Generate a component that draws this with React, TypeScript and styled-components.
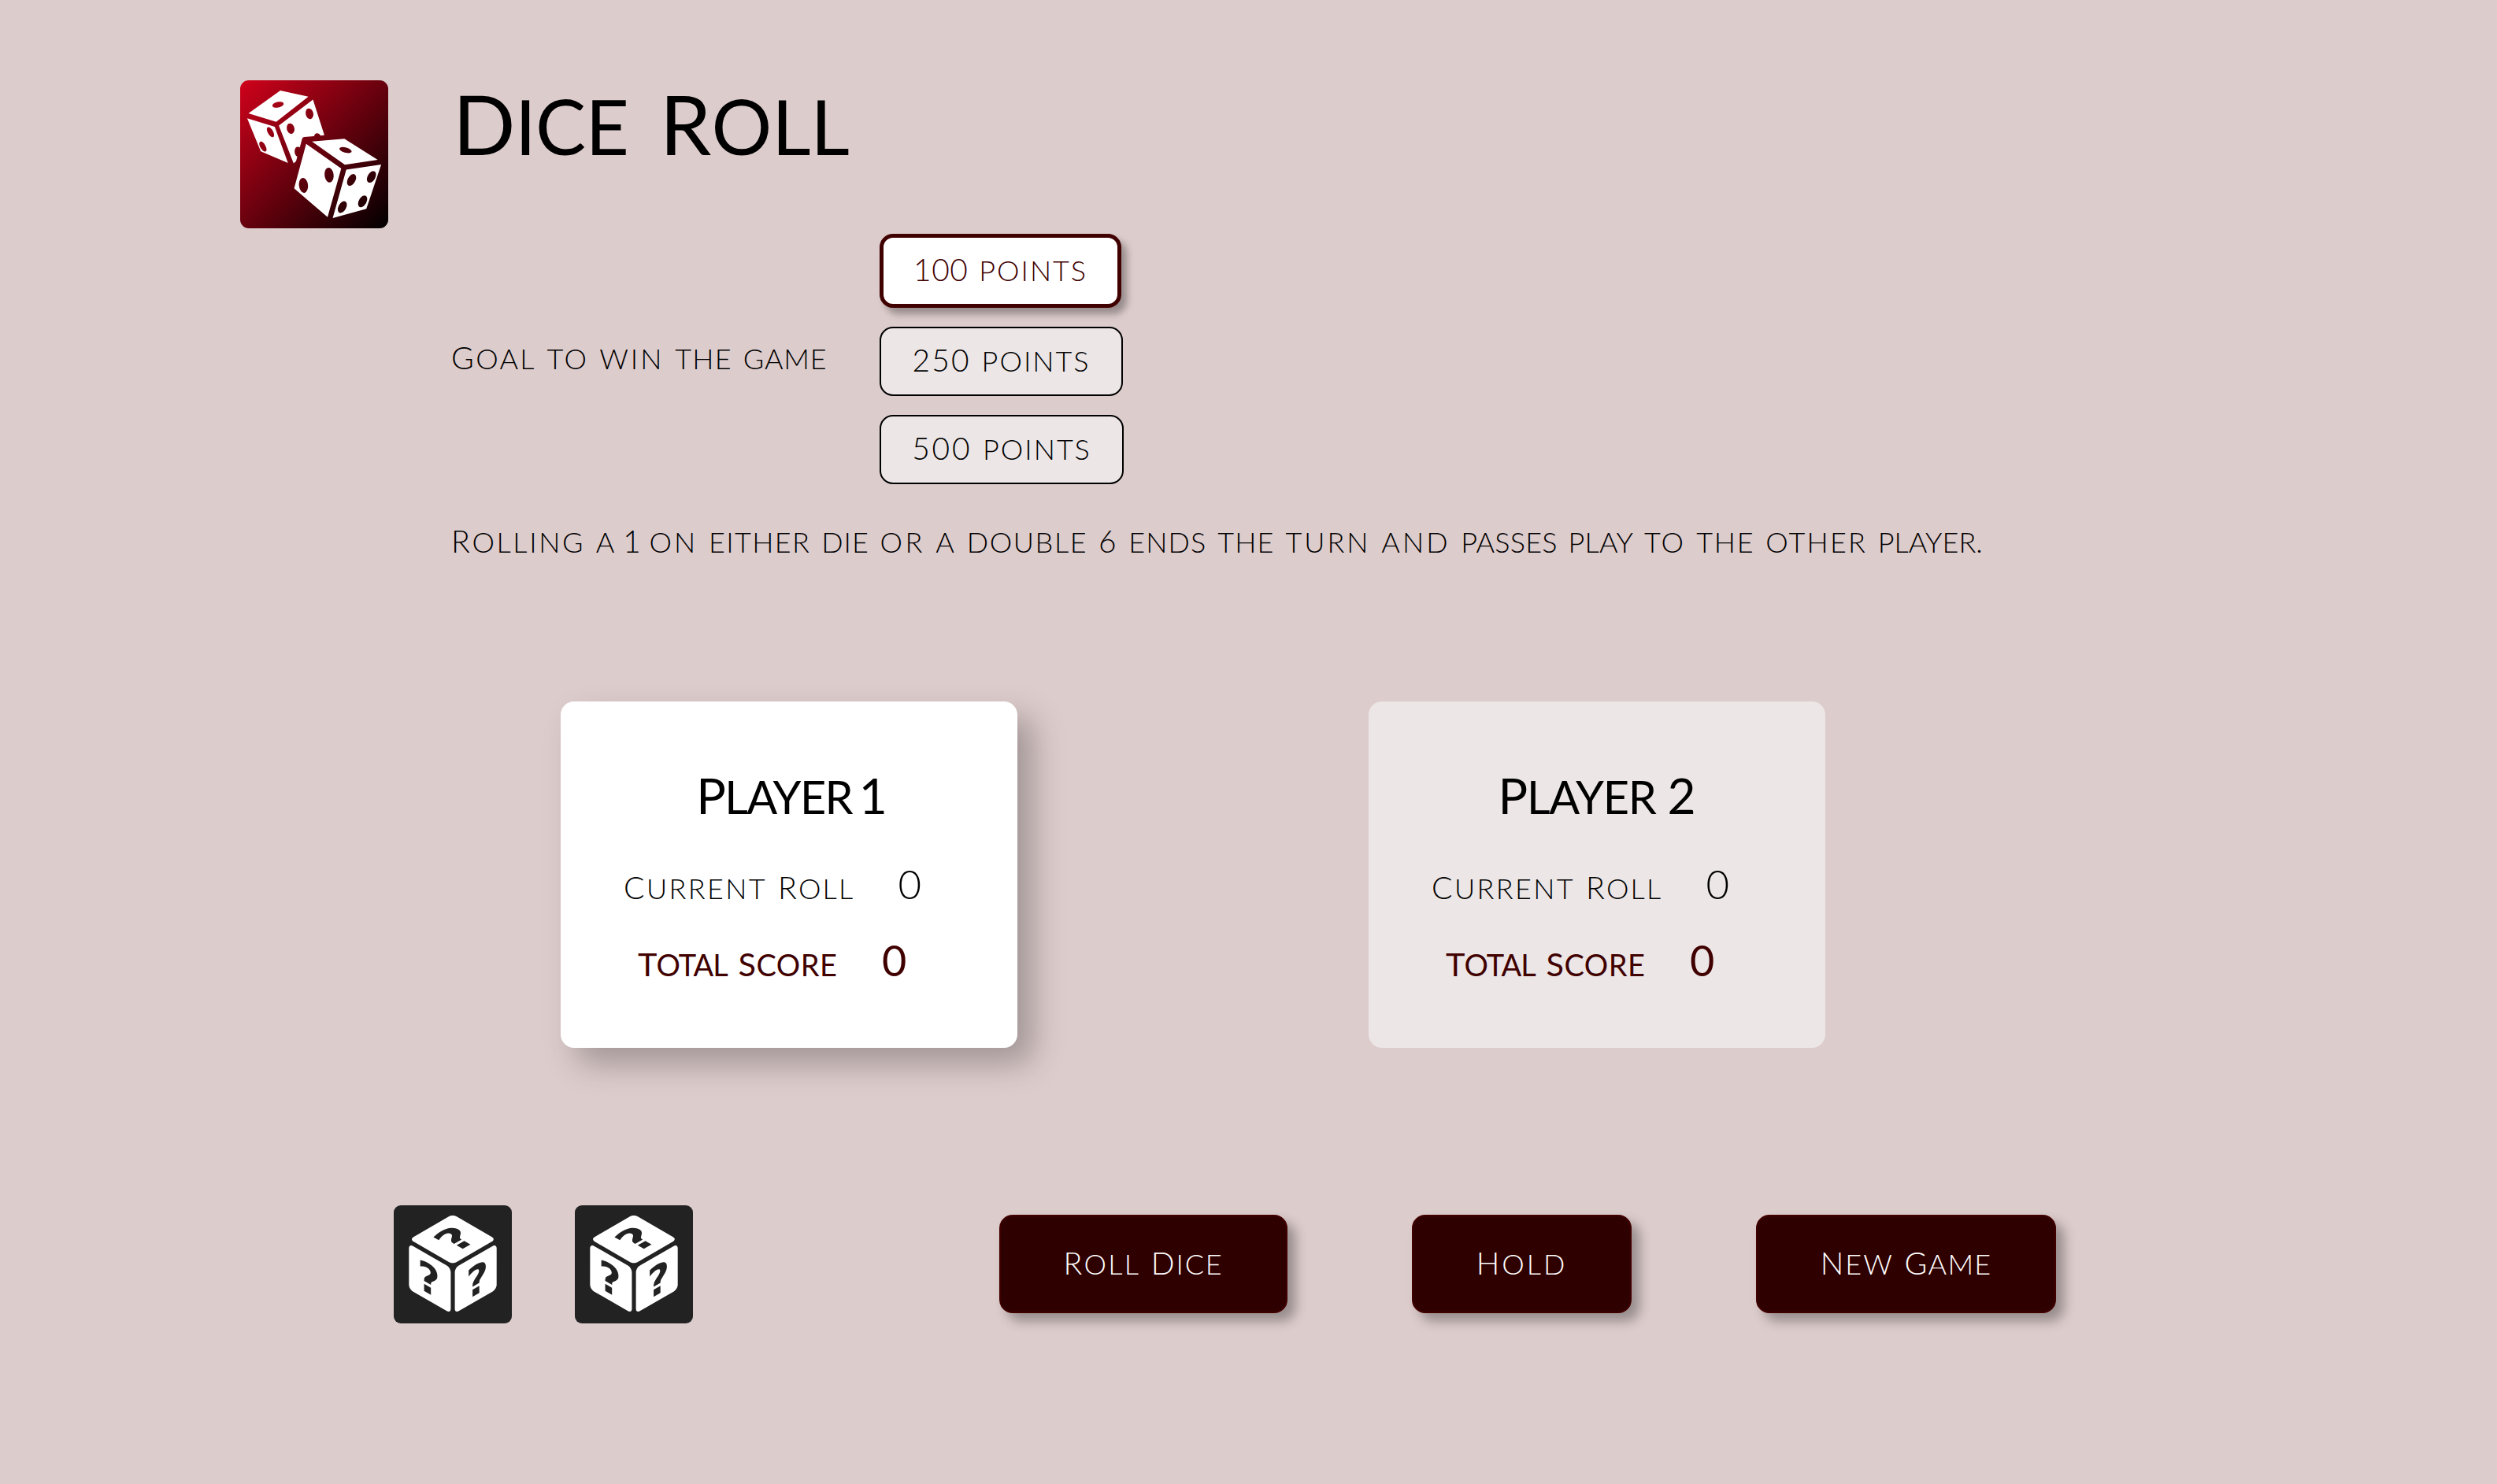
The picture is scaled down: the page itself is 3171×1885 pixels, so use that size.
import React from "react";
import styled, { createGlobalStyle } from "styled-components";
import { GiPerspectiveDiceSixFacesRandom, GiRollingDices } from "react-icons/gi";

const GlobalStyle = createGlobalStyle`
  body { margin: 0; background: #ddcccc; }
  *, *::before, *::after { box-sizing: border-box; }
`;

const Page = styled.main`
  width: 3171px;
  min-height: 1885px;
  padding: 102px 0 0 305px;
  background: #ddcccc;
  color: #000;
  font-family: Lato, "Open Sans", sans-serif;
  font-weight: 300;
  font-size: 36px;
  line-height: 44px;
`;

const Header = styled.header`
  display: flex;
  gap: 82px;
`;

const Logo = styled.div`
  flex: none;
  width: 188px;
  height: 188px;
  border-radius: 11px;
  overflow: hidden;
  background: linear-gradient(135deg, #d0021b, #000);
  color: #fff;
  svg { display: block; width: 100%; height: 100%; }
`;

const Title = styled.h1`
  margin: 0;
  font-size: 96px;
  line-height: 116px;
  font-weight: 400;
`;

const GoalRow = styled.div`
  display: flex;
  align-items: center;
  margin-top: 79px;
`;

const GoalLabel = styled.div`
  width: 544px;
  margin-left: -2px;
  padding-bottom: 2px;
`;

const Options = styled.div`
  display: flex;
  flex-direction: column;
  align-items: flex-start;
  gap: 24px;
`;

const Option = styled.button<{ $active?: boolean; $width: number }>`
  width: ${(p) => p.$width}px;
  height: ${(p) => (p.$active ? 94 : 88)}px;
  padding: 0 0 2px;
  border: ${(p) => (p.$active ? "5px solid #400000" : "2px solid #000")};
  border-radius: 17px;
  background: ${(p) => (p.$active ? "#fff" : "#ece6e6")};
  color: ${(p) => (p.$active ? "#400000" : "#000")};
  font: inherit;
  box-shadow: ${(p) => (p.$active ? "7px 8px 10px rgba(0, 0, 0, 0.32)" : "none")};
`;

const Rule = styled.p`
  margin: 51px 0 0 -2px;
  white-space: nowrap;
`;

const Players = styled.section`
  display: flex;
  gap: 446px;
  margin: 181px 0 0 407px;
`;

const Card = styled.article<{ $active?: boolean }>`
  width: 580px;
  height: 440px;
  padding-top: 86px;
  border-radius: 17px;
  background: ${(p) => (p.$active ? "#fff" : "#ece6e6")};
  box-shadow: ${(p) => (p.$active ? "20px 20px 40px rgba(0, 0, 0, 0.27)" : "none")};
`;

const PlayerName = styled.h2`
  margin: 0;
  text-align: center;
  font-size: 57.6px;
  line-height: 70px;
  font-weight: 400;
`;

const ScoreRow = styled.div<{ $total?: boolean }>`
  display: flex;
  align-items: baseline;
  height: 56px;
  line-height: 56px;
  margin-top: ${(p) => (p.$total ? 41 : 48)}px;
  padding-left: ${(p) => (p.$total ? 98 : 80)}px;
  color: ${(p) => (p.$total ? "#400000" : "#000")};
  font-weight: ${(p) => (p.$total ? 400 : 300)};
  font-size: ${(p) => (p.$total ? 38 : 36)}px;
`;

const ScoreLabel = styled.span<{ $width: number }>`
  width: ${(p) => p.$width}px;
`;

const Score = styled.span<{ $total?: boolean }>`
  font-size: ${(p) => (p.$total ? 54 : 51)}px;
`;

const Footer = styled.footer`
  display: flex;
  margin: 200px 0 0 195px;
`;

const DiceGroup = styled.div`
  display: flex;
  gap: 80px;
  width: 769px;
`;

const Die = styled.div`
  width: 150px;
  height: 150px;
  border-radius: 9px;
  background: #222;
  color: #fff;
  svg { display: block; width: 100%; height: 100%; }
`;

const Actions = styled.div`
  display: flex;
  gap: 158px;
  padding-top: 12px;
`;

const Action = styled.button<{ $width: number }>`
  width: ${(p) => p.$width}px;
  height: 125px;
  padding: 0 0 1px;
  border: 2px solid #400000;
  border-radius: 17px;
  background: #2f0000;
  color: #fff;
  font: inherit;
  box-shadow: 10px 10px 15px rgba(0, 0, 0, 0.32);
`;

const Line = styled.span<{ $gap: number }>`
  word-spacing: ${(p) => p.$gap}px;
  white-space: nowrap;
`;

type WordKind = "number" | "capital" | "plain";

const Word = styled.span<{ $kind: WordKind; $track: number }>`
  display: inline-block;
  text-transform: uppercase;
  letter-spacing: ${(p) => p.$track}px;
  font-size: ${(p) => (p.$kind === "number" ? "1.08em" : "1em")};
  line-height: ${(p) => (p.$kind === "number" ? "1" : "inherit")};
  &::first-letter {
    font-size: ${(p) => (p.$kind === "capital" ? "1.09em" : "1em")};
    line-height: 0;
  }
`;

const kindOf = (word: string): WordKind =>
  /^\d/.test(word) ? "number" : /^[A-Z]/.test(word) ? "capital" : "plain";

interface CapsProps {
  text: string;
  /** Letter spacing of each word, in px. */
  track: number[];
  /** Extra space between words, in px. */
  gap?: number;
}

/** Small capitals: full-size initials and figures, slightly shorter letters. */
function Caps({ text, track, gap = 4 }: CapsProps) {
  return (
    <Line $gap={gap}>
      {text.split(" ").map((word, i) => (
        <React.Fragment key={i}>
          {i > 0 && " "}
          <Word $kind={kindOf(word)} $track={track[i] ?? 0}>{word}</Word>
        </React.Fragment>
      ))}
    </Line>
  );
}

const goals = [
  { text: "100 points", width: 307, track: [0.6, 2] },
  { text: "250 points", width: 309, track: [2.2, 2] },
  { text: "500 points", width: 310, track: [2.8, 2] },
];

const players = [
  { name: "Player 1", track: [-1.6, -7], gap: -6 },
  { name: "Player 2", track: [-1.2, 0], gap: 0 },
];

const actions = [
  { text: "Roll Dice", width: 366, track: [2.2, 1.8] },
  { text: "Hold", width: 279, track: [3] },
  { text: "New Game", width: 381, track: [2, 1.2] },
];

const ruleTrack = [
  2.6, -3, -3, 3, 1.4, 1, 3.3, 2, 1.6, 2, 1.1, 1.2, 3, 3, 0.2, 0.2, 2.3, 1.8, 2.2, 0,
];

export default function App() {
  return (
    <Page>
      <GlobalStyle />
      <Header>
        <Logo><GiRollingDices /></Logo>
        <div>
          <Title><Caps text="Dice Roll" track={[-0.7, 0]} gap={15} /></Title>
          <GoalRow>
            <GoalLabel><Caps text="Goal to win the game" track={[2.3, 2.5, 3, 1.3, 0.8]} /></GoalLabel>
            <Options>
              {goals.map((g, i) => (
                <Option key={g.text} $active={i === 0} $width={g.width}>
                  <Caps text={g.text} track={g.track} />
                </Option>
              ))}
            </Options>
          </GoalRow>
          <Rule>
            <Caps
              text="Rolling a 1 on either die or a double 6 ends the turn and passes play to the other player."
              track={ruleTrack}
            />
          </Rule>
        </div>
      </Header>
      <Players>
        {players.map((p, i) => (
          <Card key={p.name} $active={i === 0}>
            <PlayerName><Caps text={p.name} track={p.track} gap={p.gap} /></PlayerName>
            <ScoreRow>
              <ScoreLabel $width={348.5}><Caps text="Current Roll" track={[2.4, 2.2]} /></ScoreLabel>
              <Score>0</Score>
            </ScoreRow>
            <ScoreRow $total>
              <ScoreLabel $width={310}><Caps text="Total Score" track={[-1, 0.5]} /></ScoreLabel>
              <Score $total>0</Score>
            </ScoreRow>
          </Card>
        ))}
      </Players>
      <Footer>
        <DiceGroup>
          <Die><GiPerspectiveDiceSixFacesRandom /></Die>
          <Die><GiPerspectiveDiceSixFacesRandom /></Die>
        </DiceGroup>
        <Actions>
          {actions.map((a) => (
            <Action key={a.text} $width={a.width}><Caps text={a.text} track={a.track} /></Action>
          ))}
        </Actions>
      </Footer>
    </Page>
  );
}
